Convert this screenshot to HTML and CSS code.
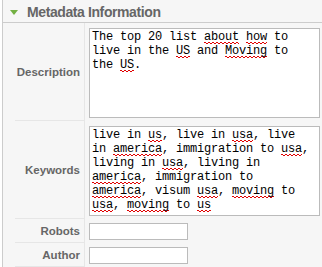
FILE: index.html
```
<!DOCTYPE html>
<html lang="en">

<head>
  <meta charset="UTF-8" />
  <meta name="viewport" content="width=device-width, initial-scale=1.0" />
  <title>Metadata Information</title>
  <link rel="stylesheet" href="styles.css">
</head>

<body>
  <div class="pane">
    <h3 class="pane-title"><span class="arrow"></span>Metadata Information</h3>
    <table class="paramlist">
      <tr>
        <td class="key">Description</td>
        <td class="field">
          <div class="textarea">The top 20 list <span class="sp">about</span> <span class="sp">how</span> to live in the <span class="sp">US</span> and <span class="sp">Moving</span> to the <span class="sp">US</span>.</div>
        </td>
      </tr>
      <tr>
        <td class="key">Keywords</td>
        <td class="field">
          <div class="textarea">live in <span class="sp">us</span>, live in <span class="sp">usa</span>, live in <span class="sp">america</span>, immigration to <span class="sp">usa</span>, living in <span class="sp">usa</span>, living in <span class="sp">america</span>, immigration to <span class="sp">america</span>, visum <span class="sp">usa</span>, <span class="sp">moving</span> to <span class="sp">usa</span>, <span class="sp">moving</span> to <span class="sp">us</span></div>
        </td>
      </tr>
      <tr>
        <td class="key">Robots</td>
        <td class="field"><input class="text" type="text" /></td>
      </tr>
      <tr>
        <td class="key">Author</td>
        <td class="field"><input class="text" type="text" /></td>
      </tr>
    </table>
  </div>
</body>

</html>
```

FILE: styles.css
```
body {
  margin: 0;
  background: #fff;
  font-family: "Liberation Sans", Arial, sans-serif;
  overflow: hidden;
}

.pane {
  margin-left: 2px;
  border-left: 1px solid #ccc;
  background: #f6f6f6;
  height: 267px;
}

.pane-title {
  margin: 0;
  padding: 2px 0 0 7px;
  line-height: 20px;
  border-bottom: 1px solid #ccc;
  font-size: 14px;
  letter-spacing: -0.4px;
  color: #666;
  font-weight: bold;
}

.arrow {
  display: inline-block;
  width: 0;
  height: 0;
  border-left: 4px solid transparent;
  border-right: 4px solid transparent;
  border-top: 5px solid #73b043;
  margin-right: 9px;
  vertical-align: 2px;
}

.paramlist {
  margin-left: 12px;
  border-collapse: separate;
  border-spacing: 0;
}

.paramlist td {
  padding: 0;
}

.paramlist td.key {
  width: 65px;
  min-width: 65px;
  padding-right: 4px;
  border-right: 1px solid #e6e6e6;
  border-bottom: 1px solid #e6e6e6;
  text-align: right;
  vertical-align: middle;
  font-size: 11.5px;
  font-weight: bold;
  color: #666;
}

.paramlist td.field {
  padding: 4px 0 3px 4px;
  vertical-align: top;
}

.textarea {
  box-sizing: border-box;
  width: 231px;
  height: 90px;
  margin-top: 1px;
  padding: 1px 4px 1px 2px;
  border: 1px solid #bbb;
  background: #fff;
  overflow: hidden;
  font-family: "Liberation Mono", "Courier New", monospace;
  font-size: 12px;
  letter-spacing: -0.2px;
  line-height: 14px;
  color: #000;
}

/* spellcheck squiggle */
.sp {
  background-image:
    linear-gradient(45deg, transparent 40%, #e00000 40%, #e00000 60%, transparent 60%),
    linear-gradient(135deg, transparent 40%, #e00000 40%, #e00000 60%, transparent 60%);
  background-size: 4px 2px, 4px 2px;
  background-position: 0 100%, 2px 100%;
  background-repeat: repeat-x;
}

input.text {
  display: block;
  box-sizing: border-box;
  width: 99px;
  height: 17px;
  margin: 0;
  border: 1px solid #bbb;
  background: #fff;
}
```
